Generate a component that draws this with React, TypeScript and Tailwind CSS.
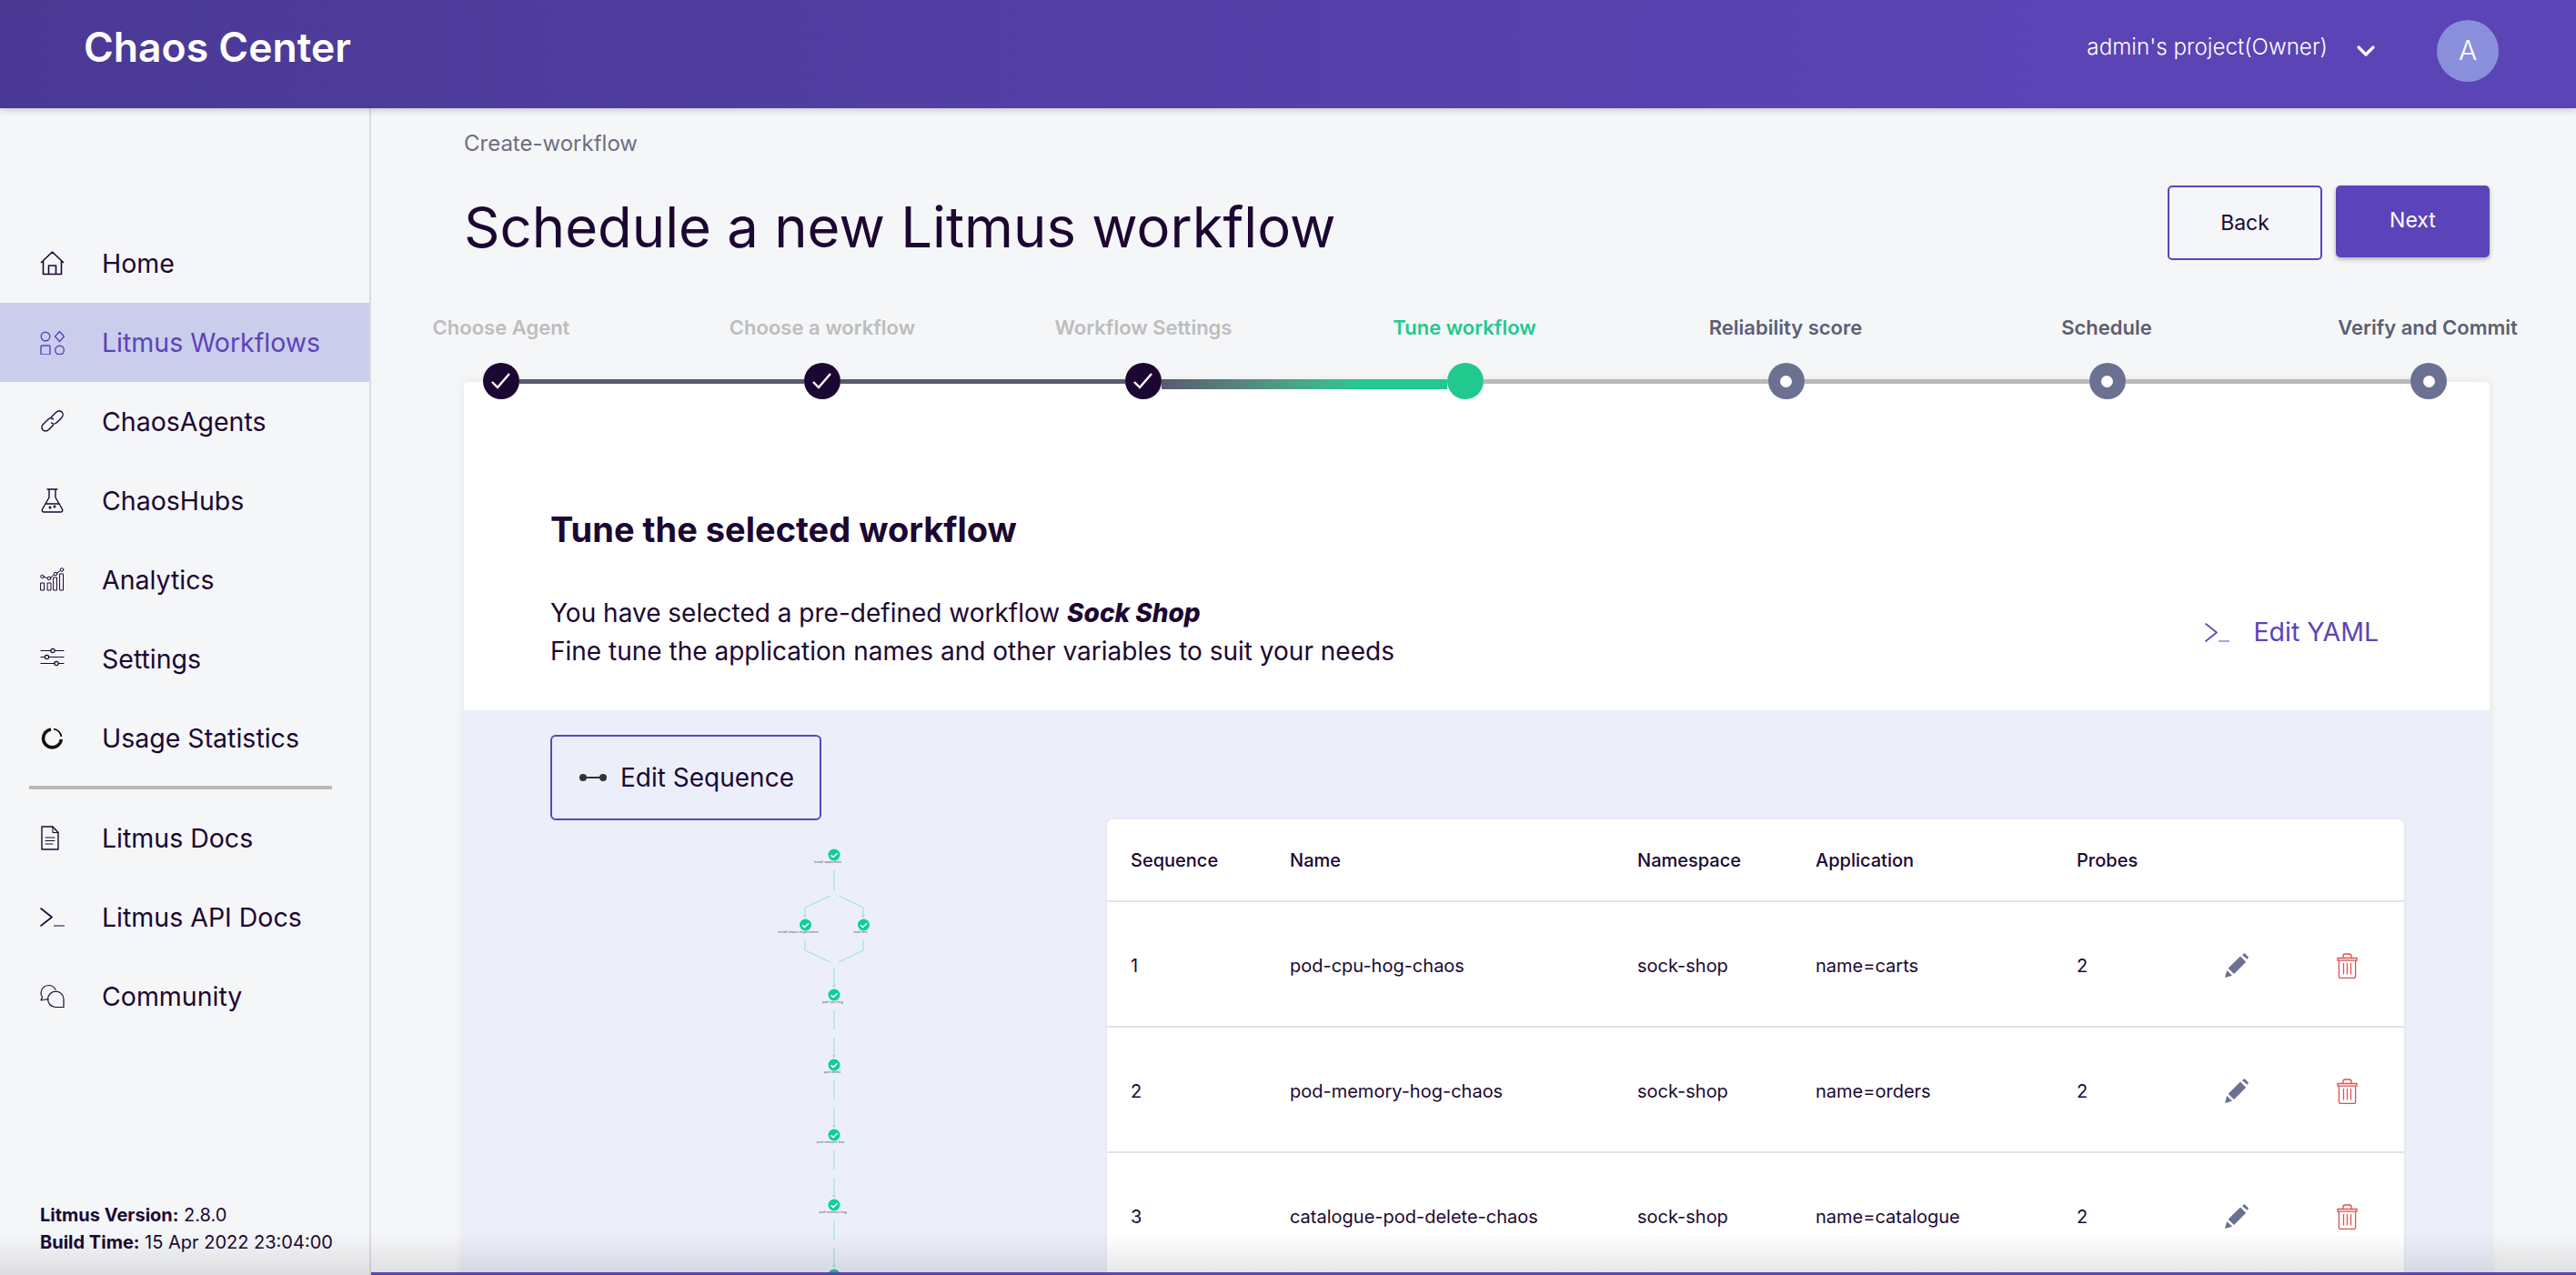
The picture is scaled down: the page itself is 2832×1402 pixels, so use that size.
import React from "react";
import { ChevronDown } from "lucide-react";

const navTop = [
  { label: "Home", icon: <HomeIcon /> },
  { label: "Litmus Workflows", icon: <WorkflowIcon />, active: true },
  { label: "ChaosAgents", icon: <LinkIcon /> },
  { label: "ChaosHubs", icon: <FlaskIcon /> },
  { label: "Analytics", icon: <AnalyticsIcon /> },
  { label: "Settings", icon: <SlidersIcon /> },
  { label: "Usage Statistics", icon: <UsageIcon /> },
];

const navBottom = [
  { label: "Litmus Docs", icon: <DocIcon /> },
  { label: "Litmus API Docs", icon: <TerminalIcon /> },
  { label: "Community", icon: <ChatIcon /> },
];

const steps = [
  { label: "Choose Agent", state: "done" },
  { label: "Choose a workflow", state: "done" },
  { label: "Workflow Settings", state: "done" },
  { label: "Tune workflow", state: "active" },
  { label: "Reliability score", state: "todo" },
  { label: "Schedule", state: "todo" },
  { label: "Verify and Commit", state: "todo" },
];

const experiments = [
  { seq: 1, name: "pod-cpu-hog-chaos", ns: "sock-shop", app: "name=carts", probes: 2 },
  { seq: 2, name: "pod-memory-hog-chaos", ns: "sock-shop", app: "name=orders", probes: 2 },
  { seq: 3, name: "catalogue-pod-delete-chaos", ns: "sock-shop", app: "name=catalogue", probes: 2 },
];

export default function App() {
  return (
    <div className="relative flex h-screen w-full flex-col overflow-hidden bg-[#f5f6f8] font-['Inter',sans-serif] text-[#1c0732]">
      <Header />
      <div className="flex min-h-0 flex-1">
        <Sidebar />
        <main className="min-w-0 flex-1 overflow-hidden pl-[102px] pr-[95px] pt-[24px]">
          <p className="text-[24px] leading-[30px] text-[#6e6e80]">Create-workflow</p>
          <div className="mt-[31px] flex items-start justify-between">
            <h1 className="mt-[9px] text-[61.6px] leading-[74px] font-normal">Schedule a new Litmus workflow</h1>
            <div className="flex items-start gap-[15px]">
              <button className="ml-[1px] h-[82px] w-[170px] rounded-[5px] border-2 border-[#5b44ba] text-[23px]">Back</button>
              <button className="h-[79px] w-[169px] rounded-[5px] bg-[#5b44ba] pb-[2px] text-[23px] text-white shadow-[0_2px_5px_rgba(0,0,0,0.3)]">
                Next
              </button>
            </div>
          </div>
          <Stepper />
          <section className="-mt-[19px] rounded-t-[5px] bg-white shadow-[0_0_12px_rgba(0,0,0,0.08)]">
            <div className="px-[95px] pb-[44px] pt-[139px]">
              <h2 className="text-[38px] leading-[46px] font-bold">Tune the selected workflow</h2>
              <div className="mt-[48px] flex items-center justify-between pr-[27px]">
                <p className="text-[28px] leading-[42px]">
                  You have selected a pre-defined workflow <strong className="font-extrabold italic">Sock Shop</strong>
                  <br />
                  Fine tune the application names and other variables to suit your needs
                </p>
                <button className="flex items-center gap-[26px] text-[28.5px] text-[#5b44ba]">
                  <TerminalIcon />
                  Edit YAML
                </button>
              </div>
            </div>
            <div className="flex h-[700px] bg-[#eceffa] pl-[95px] pr-[94px] pt-[27px]">
              <div className="w-[612px] shrink-0">
                <button className="flex h-[94px] w-[298px] items-center gap-[14px] rounded-[6px] border-2 border-[#5b44ba] pl-[29px] text-[28px]">
                  <svg width="32" height="12" viewBox="0 0 32 12">
                    <path d="M6 6h20" stroke="#333" strokeWidth="2" />
                    <circle cx="5" cy="6" r="4" fill="#333" />
                    <circle cx="27" cy="6" r="4" fill="#333" />
                  </svg>
                  Edit Sequence
                </button>
                <WorkflowGraph />
              </div>
              <ExperimentTable />
            </div>
          </section>
        </main>
      </div>
      {/* fade and progress bar sitting over the bottom edge */}
      <div className="pointer-events-none absolute inset-x-0 bottom-0 h-[46px] bg-gradient-to-b from-transparent to-black/10" />
      <div className="absolute bottom-0 left-[408px] right-0 h-[3px] bg-[#5b44ba]" />
    </div>
  );
}

function Header() {
  return (
    <header className="relative z-20 flex h-[119px] shrink-0 items-center justify-between bg-gradient-to-r from-[#4a3994] to-[#5b44b6] to-80% pb-[8px] pl-[92px] pr-[85px] shadow-[0_2px_8px_rgba(0,0,0,0.2)]">
      <span className="-mt-[7px] text-[44.5px] font-semibold text-white">Chaos Center</span>
      <div className="flex items-center text-white">
        <span className="-mt-[6px] text-[24.2px] font-light">admin's project(Owner)</span>
        <ChevronDown className="ml-[26px] h-[32px] w-[32px]" strokeWidth={2.4} />
        <div className="ml-[62px] flex h-[68px] w-[68px] items-center justify-center rounded-full bg-[#8a8fdc] text-[30px] font-light">A</div>
      </div>
    </header>
  );
}

function Sidebar() {
  return (
    <aside className="flex w-[408px] shrink-0 flex-col border-r-2 border-[#dcdde0] pt-[127px]">
      {navTop.map((item) => (
        <NavRow key={item.label} {...item} />
      ))}
      <div className="ml-[32px] mt-[9px] h-[4px] w-[333px] bg-[#bababa]" />
      <div className="mt-[10px]">
        {navBottom.map((item) => (
          <NavRow key={item.label} {...item} />
        ))}
      </div>
      <div className="mt-auto pb-[21px] pl-[44px] text-[20px] leading-[30px]">
        <p>
          <b className="font-bold">Litmus Version:</b> 2.8.0
        </p>
        <p>
          <b className="font-bold">Build Time:</b> 15 Apr 2022 23:04:00
        </p>
      </div>
    </aside>
  );
}

function NavRow({ label, icon, active }: { label: string; icon: React.ReactNode; active?: boolean }) {
  return (
    <div className={`flex h-[87px] items-center pl-[44px] text-[28.5px] ${active ? "bg-[#cbcdec] text-[#5b44ba]" : ""}`}>
      <span className="flex w-[68px] shrink-0">{icon}</span>
      <span className="pt-[1px]">{label}</span>
    </div>
  );
}

function Stepper() {
  return (
    <div className="relative z-10">
      <div className="-ml-[135.5px] mt-[59px] grid w-[2471px] grid-cols-7">
        {steps.map((s) => (
          <span
            key={s.label}
            className={`text-center text-[22px] leading-[28px] font-semibold ${
              s.state === "done" ? "text-[#bdbdbd]" : s.state === "active" ? "text-[#22c98f]" : "text-[#5c5f72]"
            }`}
          >
            {s.label}
          </span>
        ))}
      </div>
      <div className="ml-[21px] mt-[25px] flex w-[2159px] items-start">
        {steps.map((s, i) => (
          <React.Fragment key={s.label}>
            <StepDot state={s.state} />
            {i < steps.length - 1 && <StepLine index={i} />}
          </React.Fragment>
        ))}
      </div>
    </div>
  );
}

function StepLine({ index }: { index: number }) {
  if (index < 2) return <div className="mt-[18px] h-[5px] flex-1 bg-[#5a5a70]" />;
  if (index === 2) return <div className="mt-[18px] h-[11px] flex-1 bg-gradient-to-r from-[#5a5a70] to-[#22c98f] to-70%" />;
  return <div className="mt-[18px] h-[5px] flex-1 bg-[#b9b9b9]" />;
}

function StepDot({ state }: { state: string }) {
  if (state === "done") {
    return (
      <div className="flex h-[40px] w-[40px] shrink-0 items-center justify-center rounded-full bg-[#1c0732]">
        <svg width="24" height="20" viewBox="0 0 24 20" fill="none" stroke="white" strokeWidth="2.4">
          <path d="M2 11l6 6L21 2" />
        </svg>
      </div>
    );
  }
  if (state === "active") return <div className="h-[40px] w-[40px] shrink-0 rounded-full bg-[#22c98f]" />;
  return (
    <div className="flex h-[40px] w-[40px] shrink-0 items-center justify-center rounded-full bg-[#6b7190]">
      <div className="h-[13px] w-[13px] rounded-full bg-white" />
    </div>
  );
}

function ExperimentTable() {
  const cols = "grid grid-cols-[175px_382px_196px_287px_163px_123px_1fr] items-center pl-[26px]";
  return (
    <div className="mt-[93px] min-w-0 flex-1 rounded-t-[6px] bg-white text-[20px] shadow-[0_0_4px_rgba(0,0,0,0.06)]">
      <div className={`${cols} h-[91px] border-b-[2px] border-[#e3e3e3] font-medium`}>
        <span>Sequence</span>
        <span>Name</span>
        <span>Namespace</span>
        <span>Application</span>
        <span>Probes</span>
      </div>
      {experiments.map((e) => (
        <div key={e.seq} className={`${cols} h-[138px] border-b-[2px] border-[#e3e3e3] pt-[3px]`}>
          <span>{e.seq}</span>
          <span>{e.name}</span>
          <span>{e.ns}</span>
          <span>{e.app}</span>
          <span>{e.probes}</span>
          <PencilIcon />
          <TrashIcon />
        </div>
      ))}
    </div>
  );
}

function GraphNode({ x, y, label, dx = 0 }: { x: number; y: number; label?: string; dx?: number }) {
  return (
    <g>
      <circle cx={x} cy={y} r="6.5" fill="#0ccf97" />
      <path d={`M${x - 3.4} ${y + 0.4}l2.4 2.2 4.6-4.2`} fill="none" stroke="white" strokeWidth="1.5" />
      {label && (
        <text x={x + dx} y={y + 9} textAnchor="middle" fontSize="3.6" fill="#555">
          {label}
        </text>
      )}
    </g>
  );
}

// the workflow preview is a scaled down drawing, same as in the real app
function WorkflowGraph() {
  const edge = "#7fe3cb";
  return (
    <svg className="ml-[235px] mt-[24px] block" width="130" height="490" viewBox="840 925 130 490">
      <g fill="none" stroke={edge} strokeWidth="0.9">
        <path d="M917 956v22M913 984l-28 13v10M922 984l27 13v10" />
        <path d="M885 1033v11l28 13M949 1033v11l-27 13M917 1063v21" />
        <path d="M917 1110v21M917 1140v21M917 1187v21M917 1217v21M917 1264v21M917 1294v21M917 1341v21M917 1371v21" />
        <path d="M883.5 1005l1.5 2.5 1.5-2.5M947.5 1005l1.5 2.5 1.5-2.5" />
        <path d="M915.5 1082l1.5 2.5 1.5-2.5M915.5 1159l1.5 2.5 1.5-2.5M915.5 1236l1.5 2.5 1.5-2.5M915.5 1313l1.5 2.5 1.5-2.5M915.5 1390l1.5 2.5 1.5-2.5" />
      </g>
      <GraphNode x={917} y={939} label="install-application" dx={-7} />
      <GraphNode x={885.5} y={1016} label="install-chaos-experiments" dx={-8} />
      <GraphNode x={949.5} y={1016} label="load-test" dx={-3.5} />
      <GraphNode x={917} y={1093} label="pod-cpu-hog" dx={-1.7} />
      <GraphNode x={917} y={1170} label="pod-delete" dx={-2} />
      <GraphNode x={917} y={1247} label="pod-network-loss" dx={-3.7} />
      <GraphNode x={917} y={1324} label="pod-memory-hog" dx={-1.3} />
      <GraphNode x={917} y={1401} />
    </svg>
  );
}

function PencilIcon() {
  return (
    <svg width="27" height="27" viewBox="0 0 27 27" fill="#6b7190">
      <path d="M0 27l2.2-8 5.8 5.8z" />
      <path d="M3.6 16.8L17 3.6l6.2 6.2L10 23z" />
      <path d="M19 2.2L21.4 0 26 4.4 24.6 6.8z" />
    </svg>
  );
}

function TrashIcon() {
  return (
    <svg width="23" height="28" viewBox="0 0 23 28" fill="none" stroke="#e04f4f" strokeWidth="1.3">
      <path d="M1 5.5h21v2.6H1z" />
      <path d="M7 5.5V3.2C7 1.8 8 1 9.2 1h4.6C15 1 16 1.8 16 3.2v2.3" />
      <path d="M2.4 8.1v17.4c0 1 .8 1.9 1.8 1.9h14.6c1 0 1.8-.9 1.8-1.9V8.1" />
      <path d="M7.5 11v12.5M11.5 11v12.5M15.5 11v12.5" />
    </svg>
  );
}

function Glyph({ children }: { children: React.ReactNode }) {
  return (
    <svg width="27" height="27" viewBox="0 0 27 27" fill="none" stroke="currentColor" strokeWidth="1.4" strokeLinecap="round" strokeLinejoin="round">
      {children}
    </svg>
  );
}

function HomeIcon() {
  return (
    <Glyph>
      <path d="M1.5 12.5L13.5 1l12 11.5M3.5 11v14.5h20V11M9.5 25.5V16h8v9.5" strokeWidth="1.6" />
    </Glyph>
  );
}

function WorkflowIcon() {
  return (
    <Glyph>
      <circle cx="6" cy="7" r="4.8" />
      <path d="M21.5 1.5l5 5.5-5 5.5-5-5.5z" />
      <rect x="1" y="17" width="10" height="10" rx="0.8" />
      <circle cx="21.5" cy="22" r="4.8" />
    </Glyph>
  );
}

function LinkIcon() {
  return (
    <Glyph>
      <path d="M12.5 8.5l5-5c2-2 5-2 6.5-.4 1.6 1.6 1.5 4.4-.4 6.3l-5 5c-1.9 1.9-4.5 2-6 .5" />
      <path d="M14.5 11c-1.5-1.5-4-1.4-6 .5l-5 5c-2 2-2 4.7-.4 6.3 1.6 1.6 4.5 1.6 6.4-.3l5-5" />
    </Glyph>
  );
}

function FlaskIcon() {
  return (
    <Glyph>
      <path d="M8 1h11M10 1v9L2.5 23c-.8 1.5.2 3 1.8 3h18.4c1.6 0 2.6-1.5 1.8-3L17 10V1" />
      <path d="M6.5 17h14" />
      <circle cx="11" cy="21" r="0.8" fill="currentColor" />
      <circle cx="16" cy="20" r="0.8" fill="currentColor" />
    </Glyph>
  );
}

function AnalyticsIcon() {
  return (
    <Glyph>
      <g strokeWidth="1">
        <rect x="1" y="17" width="3.5" height="8" />
        <rect x="8.5" y="17" width="3.5" height="8" />
        <rect x="15" y="11" width="3.5" height="14" />
        <rect x="22" y="7" width="3.5" height="18" />
        <circle cx="2.5" cy="10" r="1.8" />
        <circle cx="10" cy="12" r="1.8" />
        <circle cx="17" cy="7" r="1.8" />
        <circle cx="24" cy="2.5" r="1.8" />
        <path d="M4.2 10.5l4 1M11.5 11l4-3M18.5 6l4-2.5" />
      </g>
    </Glyph>
  );
}

function SlidersIcon() {
  return (
    <Glyph>
      <g strokeWidth="1.2">
        <path d="M1 4.5h11M16.5 4.5h9.5M1 11.5h4.5M10 11.5h16M1 18.5h15M20.5 18.5h5.5" />
        <circle cx="14" cy="4.5" r="2.2" />
        <circle cx="7.5" cy="11.5" r="2.2" />
        <circle cx="18" cy="18.5" r="2.2" />
      </g>
    </Glyph>
  );
}

function UsageIcon() {
  return (
    <svg width="27" height="27" viewBox="0 0 27 27" fill="none" stroke="#111">
      <path d="M12 4a10 10 0 1 0 11.4 11" strokeWidth="3.6" />
      <path d="M15 3.6a10 10 0 0 1 8.4 8.4" strokeWidth="1.8" />
    </svg>
  );
}

function DocIcon() {
  return (
    <Glyph>
      <path d="M2 1h12l6 6.5V26H2z" strokeWidth="1.4" />
      <path d="M14 1v6.5h6M6 13h10M6 16.5h10M6 20h8" strokeWidth="1.1" />
    </Glyph>
  );
}

function TerminalIcon() {
  return (
    <Glyph>
      <path d="M1 4l12 9.5L1 23" strokeWidth="1.6" />
      <path d="M15.5 23H27" strokeWidth="1.2" />
    </Glyph>
  );
}

function ChatIcon() {
  return (
    <Glyph>
      <path d="M9 16.5c-1 .3-2 .5-3 .5l-5 1 1.5-3.5C1.5 13 1 11.5 1 10c0-5 4-8.5 8.5-8.5 3.5 0 6 1.8 7.500 4.500" strokeWidth="1.2" />
      <path d="M26 25.5h-9a8.700 8.700 0 1 1 9-8.700z" strokeWidth="1.2" />
    </Glyph>
  );
}
